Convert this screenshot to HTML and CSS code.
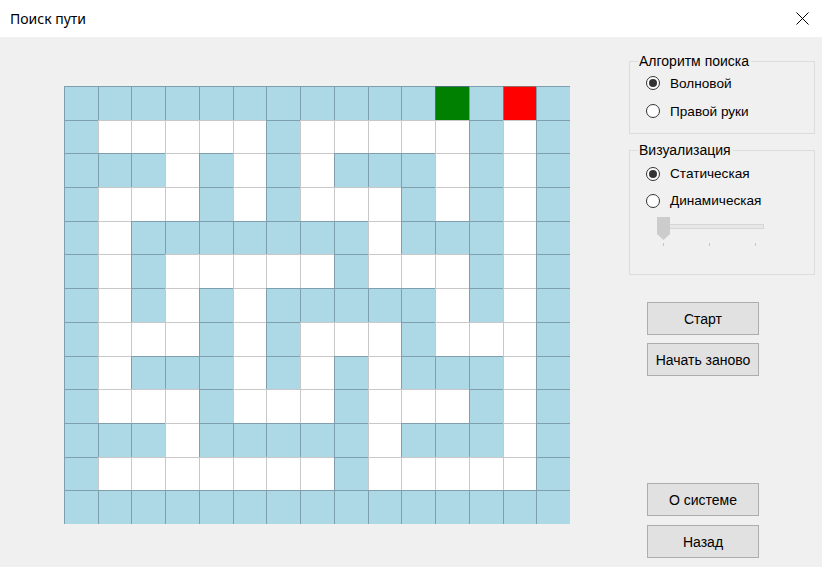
FILE: index.html
```html
<!DOCTYPE html>
<html lang="ru">
<head>
<meta charset="utf-8">
<title>Поиск пути</title>
<link rel="stylesheet" href="styles.css">
</head>
<body>
<div class="window">
  <div class="titlebar">
    <span class="title">Поиск пути</span>
    <svg class="close" width="13" height="13" viewBox="0 0 13 13"><path d="M0.5 0.5 L12.5 12.5 M12.5 0.5 L0.5 12.5" stroke="#000" stroke-width="1" fill="none"/></svg>
  </div>
  <div class="content">
    <div class="maze">
      <div class="b"></div><div class="b"></div><div class="b"></div><div class="b"></div><div class="b"></div><div class="b"></div><div class="b"></div><div class="b"></div><div class="b"></div><div class="b"></div><div class="b"></div><div class="g"></div><div class="b"></div><div class="r"></div><div class="b"></div>
      <div class="b"></div><div class="w"></div><div class="w"></div><div class="w"></div><div class="w"></div><div class="w"></div><div class="b"></div><div class="w"></div><div class="w"></div><div class="w"></div><div class="w"></div><div class="w"></div><div class="b"></div><div class="w"></div><div class="b"></div>
      <div class="b"></div><div class="b"></div><div class="b"></div><div class="w"></div><div class="b"></div><div class="w"></div><div class="b"></div><div class="w"></div><div class="b"></div><div class="b"></div><div class="b"></div><div class="w"></div><div class="b"></div><div class="w"></div><div class="b"></div>
      <div class="b"></div><div class="w"></div><div class="w"></div><div class="w"></div><div class="b"></div><div class="w"></div><div class="b"></div><div class="w"></div><div class="w"></div><div class="w"></div><div class="b"></div><div class="w"></div><div class="b"></div><div class="w"></div><div class="b"></div>
      <div class="b"></div><div class="w"></div><div class="b"></div><div class="b"></div><div class="b"></div><div class="b"></div><div class="b"></div><div class="b"></div><div class="b"></div><div class="w"></div><div class="b"></div><div class="b"></div><div class="b"></div><div class="w"></div><div class="b"></div>
      <div class="b"></div><div class="w"></div><div class="b"></div><div class="w"></div><div class="w"></div><div class="w"></div><div class="w"></div><div class="w"></div><div class="b"></div><div class="w"></div><div class="w"></div><div class="w"></div><div class="b"></div><div class="w"></div><div class="b"></div>
      <div class="b"></div><div class="w"></div><div class="b"></div><div class="w"></div><div class="b"></div><div class="w"></div><div class="b"></div><div class="b"></div><div class="b"></div><div class="b"></div><div class="b"></div><div class="w"></div><div class="b"></div><div class="w"></div><div class="b"></div>
      <div class="b"></div><div class="w"></div><div class="w"></div><div class="w"></div><div class="b"></div><div class="w"></div><div class="b"></div><div class="w"></div><div class="w"></div><div class="w"></div><div class="b"></div><div class="w"></div><div class="w"></div><div class="w"></div><div class="b"></div>
      <div class="b"></div><div class="w"></div><div class="b"></div><div class="b"></div><div class="b"></div><div class="w"></div><div class="b"></div><div class="w"></div><div class="b"></div><div class="w"></div><div class="b"></div><div class="b"></div><div class="b"></div><div class="w"></div><div class="b"></div>
      <div class="b"></div><div class="w"></div><div class="w"></div><div class="w"></div><div class="b"></div><div class="w"></div><div class="w"></div><div class="w"></div><div class="b"></div><div class="w"></div><div class="w"></div><div class="w"></div><div class="b"></div><div class="w"></div><div class="b"></div>
      <div class="b"></div><div class="b"></div><div class="b"></div><div class="w"></div><div class="b"></div><div class="b"></div><div class="b"></div><div class="b"></div><div class="b"></div><div class="w"></div><div class="b"></div><div class="b"></div><div class="b"></div><div class="w"></div><div class="b"></div>
      <div class="b"></div><div class="w"></div><div class="w"></div><div class="w"></div><div class="w"></div><div class="w"></div><div class="w"></div><div class="w"></div><div class="b"></div><div class="w"></div><div class="w"></div><div class="w"></div><div class="w"></div><div class="w"></div><div class="b"></div>
      <div class="b"></div><div class="b"></div><div class="b"></div><div class="b"></div><div class="b"></div><div class="b"></div><div class="b"></div><div class="b"></div><div class="b"></div><div class="b"></div><div class="b"></div><div class="b"></div><div class="b"></div><div class="b"></div><div class="b"></div>
    </div>
    <div class="side">
      <div class="group g1">
        <span class="legend">Алгоритм поиска</span>
        <label class="radio"><span class="circle checked"></span><span class="label">Волновой</span></label>
        <label class="radio"><span class="circle"></span><span class="label">Правой руки</span></label>
      </div>
      <div class="group g2">
        <span class="legend">Визуализация</span>
        <label class="radio"><span class="circle checked"></span><span class="label">Статическая</span></label>
        <label class="radio"><span class="circle"></span><span class="label">Динамическая</span></label>
        <svg class="trackbar" width="112" height="34" viewBox="0 0 112 34">
          <rect x="2.5" y="10.5" width="106" height="4" fill="#e7e7e7" stroke="#d6d6d6"/>
          <path d="M2 3 H15 V20 L8.5 26 L2 20 Z" fill="#cccccc"/>
          <path d="M8.5 29 V32 M54.5 29 V32 M100.5 29 V32" stroke="#c4c4c4" stroke-width="1"/>
        </svg>
      </div>
      <div class="buttons top">
        <button class="btn">Старт</button>
        <button class="btn">Начать заново</button>
      </div>
      <div class="buttons bottom">
        <button class="btn">О системе</button>
        <button class="btn">Назад</button>
      </div>
    </div>
  </div>
</div>
</body>
</html>
```

FILE: styles.css
```css
* { box-sizing: border-box; }
html, body { margin: 0; padding: 0; }
body {
  width: 822px;
  height: 567px;
  overflow: hidden;
  font-family: "Liberation Sans", Arial, sans-serif;
  font-size: 13px;
  color: #000;
}
.window {
  width: 822px;
  height: 567px;
  background: #f0f0f0;
}
.titlebar {
  height: 37px;
  background: #ffffff;
  display: flex;
  align-items: center;
  padding-left: 10px;
}
.title {
  font-family: "Noto Sans", "Open Sans", sans-serif;
  font-size: 14px;
  color: #000;
}
.close {
  margin-left: auto;
  margin-right: 13px;
  display: block;
}
.content {
  display: flex;
  align-items: flex-start;
  padding-left: 64px;
}
.maze {
  margin-top: 49px;
  width: 506px;
  height: 438px;
  display: grid;
  grid-template-columns: repeat(15, 1fr);
  grid-template-rows: repeat(13, 1fr);
}
.maze > div {
  border-left: 1px solid;
  border-top: 1px solid;
}
.maze .b { background: #add8e6; border-color: #7f9fad; }
.maze .w { background: #ffffff; border-color: #c8c8c8; }
.maze .g { background: #008000; border-color: #4d6f7a; }
.maze .r { background: #ff0000; border-color: #9a6a6a; }

.side {
  margin-left: 59px;
  width: 186px;
  margin-top: 24px;
  display: flex;
  flex-direction: column;
}
.group {
  position: relative;
  border: 1px solid #dcdcdc;
  display: flex;
  flex-direction: column;
  padding-left: 16px;
}
.legend {
  position: absolute;
  top: -9px;
  left: 8px;
  padding: 0 2px 0 1px;
  background: #f0f0f0;
  font-size: 14px;
  line-height: 16px;
  white-space: nowrap;
}
.g1 { padding-top: 7px; padding-bottom: 8px; }
.g1 .radio { height: 28px; }
.g2 { margin-top: 16px; padding-top: 9px; padding-bottom: 26px; }
.g2 .radio { height: 27px; }
.radio {
  display: flex;
  align-items: center;
  white-space: nowrap;
  font-size: 13.6px;
}
.circle {
  width: 14px;
  height: 14px;
  border: 1px solid #333333;
  border-radius: 50%;
  background: #ffffff;
  display: flex;
  align-items: center;
  justify-content: center;
  flex: none;
}
.circle.checked::after {
  content: "";
  width: 8px;
  height: 8px;
  border-radius: 50%;
  background: #333333;
}
.label { margin-left: 10px; }
.trackbar {
  display: block;
  margin-left: 9px;
}
.buttons {
  display: flex;
  flex-direction: column;
  gap: 8px;
  padding-left: 18px;
}
.buttons.top { margin-top: 27px; }
.buttons.bottom { margin-top: 107px; gap: 9px; }
.btn {
  width: 112px;
  height: 33px;
  background: #e1e1e1;
  border: 1px solid #adadad;
  font-family: "Liberation Sans", Arial, sans-serif;
  font-size: 14px;
  color: #000;
  padding: 0;
  margin: 0;
}
```
